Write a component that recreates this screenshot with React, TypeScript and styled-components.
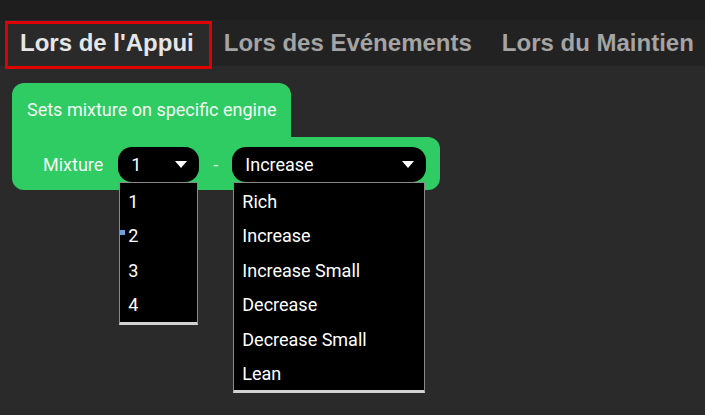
import React from "react";
import styled, { createGlobalStyle } from "styled-components";

const GlobalStyle = createGlobalStyle`
  html, body {
    margin: 0;
    padding: 0;
    background: #2a2a2a;
  }
`;

const Page = styled.div`
  min-height: 100vh;
  background: #2a2a2a;
  font-family: Roboto, "Liberation Sans", sans-serif;
`;

/* bande sombre au-dessus des onglets */
const TopStrip = styled.div`
  height: 20px;
  background: #1e1e1e;
`;

const TabBar = styled.div`
  display: flex;
  height: 46px;
  padding-left: 5px;
  background: #222222;
`;

const Tab = styled.div<{ $active?: boolean }>`
  position: relative;
  padding: 0 15px;
  line-height: 46px;
  font-family: "Liberation Sans", Arial, sans-serif;
  font-weight: bold;
  font-size: 24px;
  white-space: nowrap;
  color: ${(p) => (p.$active ? "#e6e6e6" : "#a4a4a4")};
  background: ${(p) => (p.$active ? "#2a2a2a" : "transparent")};

  /* cadre rouge autour de l'onglet actif */
  ${(p) =>
    p.$active &&
    `
    &::after {
      content: "";
      position: absolute;
      top: 1px;
      left: 0;
      right: -3px;
      bottom: -3px;
      border: 3px solid #e00000;
    }
  `}
`;

const Content = styled.div`
  padding: 17px 0 0 12px;
`;

const Card = styled.div`
  display: inline-flex;
  flex-direction: column;
  align-items: flex-start;
`;

const CardHeader = styled.div`
  background: #2ecc62;
  border-radius: 12px 12px 0 0;
  padding: 17px 15px;
  line-height: 20px;
  font-size: 18px;
  color: #f4fbf5;
`;

const CardBody = styled.div`
  display: flex;
  align-items: center;
  gap: 15px;
  background: #2ecc62;
  border-radius: 0 12px 12px 12px;
  padding: 10px 14px 8px 31px;
  font-size: 18px;
  color: #f4fbf5;
`;

const Dash = styled.span`
  margin: 0 -1px;
  color: #d8f5df;
`;

const Select = styled.div<{ $width: number }>`
  position: relative;
  display: flex;
  align-items: center;
  justify-content: space-between;
  box-sizing: border-box;
  width: ${(p) => p.$width}px;
  height: 35px;
  padding: 0 12px 0 13px;
  background: #000;
  border-radius: 14px;
  color: #fff;
  font-size: 18px;
`;

const List = styled.div`
  position: absolute;
  top: 100%;
  left: 1px;
  right: 1px;
  z-index: 2;
  padding-top: 1px;
  background: #000;
  border: 1px solid #8a8a8a;
  border-bottom: 3px solid #d2d2d2;
`;

const Option = styled.div`
  position: relative;
  height: 34.4px;
  line-height: 35px;
  padding-left: 8px;
  color: #fff;
  font-size: 18px;
  white-space: nowrap;
`;

const Marker = styled.span`
  position: absolute;
  left: 0;
  top: 12px;
  width: 5px;
  height: 5px;
  background: #6f9fd8;
`;

const Caret = () => (
  <svg width="12" height="7" viewBox="0 0 12 7">
    <path d="M0 0 H12 L6 7 Z" fill="#fff" />
  </svg>
);

const engines = ["1", "2", "3", "4"];
const mixtures = ["Rich", "Increase", "Increase Small", "Decrease", "Decrease Small", "Lean"];

const App: React.FC = () => {
  return (
    <Page>
      <GlobalStyle />
      <TopStrip />
      <TabBar>
        <Tab $active>Lors de l'Appui</Tab>
        <Tab>Lors des Evénements</Tab>
        <Tab>Lors du Maintien</Tab>
      </TabBar>

      <Content>
        <Card>
          <CardHeader>Sets mixture on specific engine</CardHeader>
          <CardBody>
            <span>Mixture</span>
            <Select $width={81}>
              <span>1</span>
              <Caret />
              <List>
                {engines.map((e) => (
                  <Option key={e}>
                    {e === "2" && <Marker />}
                    {e}
                  </Option>
                ))}
              </List>
            </Select>
            <Dash>-</Dash>
            <Select $width={194}>
              <span>Increase</span>
              <Caret />
              <List>
                {mixtures.map((m) => (
                  <Option key={m}>{m}</Option>
                ))}
              </List>
            </Select>
          </CardBody>
        </Card>
      </Content>
    </Page>
  );
};

export default App;
